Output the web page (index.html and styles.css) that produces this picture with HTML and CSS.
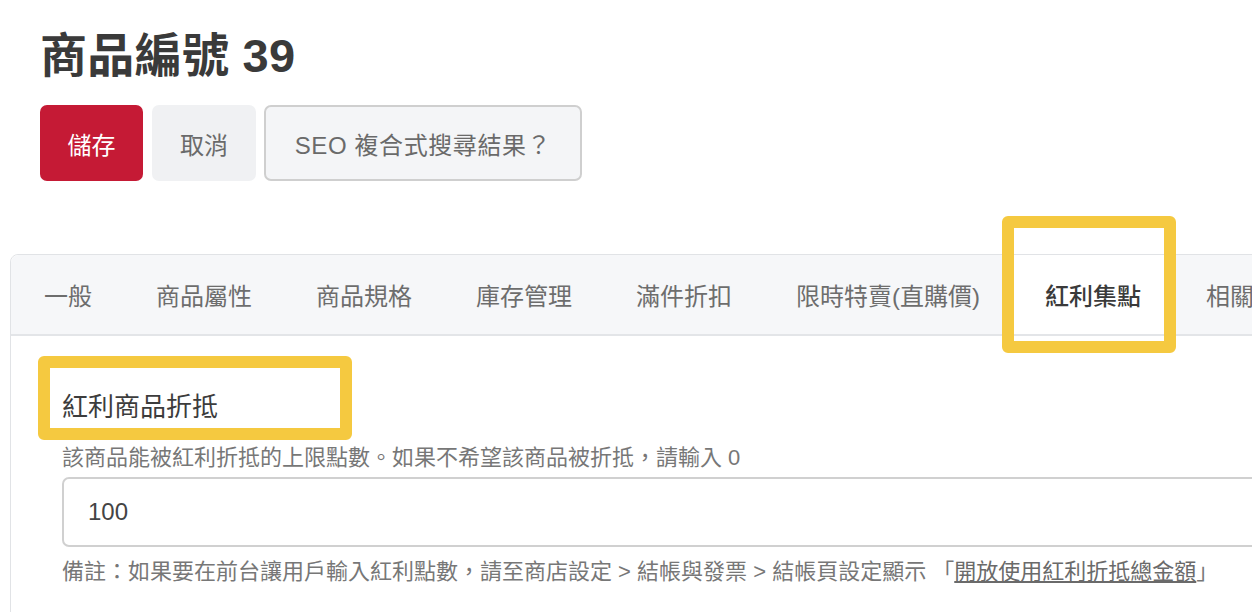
FILE: index.html
```html
<!DOCTYPE html>
<html lang="zh-Hant">
<head>
<meta charset="utf-8">
<title>商品編號 39</title>
<link rel="stylesheet" href="styles.css">
</head>
<body>
<div class="page">
  <header class="top">
    <h1 class="title">商品編號 39</h1>
    <div class="actions">
      <button class="btn btn-save">儲存</button>
      <button class="btn btn-cancel">取消</button>
      <button class="btn btn-seo">SEO 複合式搜尋結果？</button>
    </div>
  </header>

  <section class="card">
    <nav class="tabs">
      <div class="tab">一般</div>
      <div class="tab">商品屬性</div>
      <div class="tab">商品規格</div>
      <div class="tab">庫存管理</div>
      <div class="tab">滿件折扣</div>
      <div class="tab">限時特賣(直購價)</div>
      <div class="tab tab-active">紅利集點</div>
      <div class="tab">相關商品</div>
    </nav>
    <div class="card-body">
      <h2 class="section-title">紅利商品折抵</h2>
      <p class="help">該商品能被紅利折抵的上限點數。如果不希望該商品被折抵，請輸入 0</p>
      <input class="field" type="text" value="100">
      <p class="note">備註：如果要在前台讓用戶輸入紅利點數，請至商店設定 &gt; 結帳與發票 &gt; 結帳頁設定顯示 「<a class="note-link" href="#">開放使用紅利折抵總金額</a>」</p>
    </div>
  </section>

  <div class="highlight hl-tab"></div>
  <div class="highlight hl-title"></div>
</div>
</body>
</html>
```

FILE: styles.css
```css
html, body {
  margin: 0;
  padding: 0;
  overflow: hidden;
  background: #ffffff;
}

body {
  font-family: "Liberation Sans", "Noto Sans CJK TC", sans-serif;
  color: #333333;
}

.page {
  position: relative;
  width: 1252px;
  height: 612px;
  overflow: hidden;
}

.top {
  padding: 28px 0 0 40px;
}

.title {
  margin: 0;
  font-size: 47px;
  line-height: 55px;
  font-weight: 700;
  color: #3a3a3a;
  letter-spacing: 0.3px;
}

.actions {
  display: flex;
  gap: 9px;
  margin-top: 22px;
}

.btn {
  height: 76px;
  font-family: inherit;
  font-size: 24px;
  border-radius: 7px;
  border: 0;
  padding: 0 16px;
  cursor: pointer;
  white-space: nowrap;
}

.btn-save {
  width: 103px;
  background: #c51a35;
  color: #ffffff;
}

.btn-cancel {
  width: 104px;
  background: #f0f1f3;
  color: #6a6a6a;
}

.btn-seo {
  width: 318px;
  margin-left: -1px;
  background: #f4f5f7;
  color: #6a6a6a;
  border: 2px solid #cfcfcf;
  letter-spacing: 0.6px;
}

.card {
  margin: 73px 0 0 10px;
  width: 1400px;
  height: 400px;
  border: 1px solid #e1e3e6;
  border-radius: 8px;
}

.tabs {
  display: flex;
  padding-left: 1px;
  background: #f6f7f9;
  border-bottom: 2px solid #e3e5e8;
  border-radius: 8px 8px 0 0;
}

.tab {
  height: 79px;
  padding: 0 32px;
  display: flex;
  align-items: center;
  font-size: 24px;
  color: #6d6d6d;
  white-space: nowrap;
}

.tab-active {
  background: #ffffff;
  color: #3a3a3a;
  font-weight: 500;
  border-left: 1px solid #dee2e6;
  border-right: 1px solid #dee2e6;
}

.card-body {
  padding: 52px 0 0 51px;
}

.section-title {
  margin: 0;
  font-size: 26px;
  line-height: 39px;
  font-weight: 400;
  color: #3c3c3c;
}

.help {
  margin: 14px 0 0;
  font-size: 22px;
  line-height: 33px;
  color: #777777;
}

.field {
  display: block;
  box-sizing: border-box;
  margin-top: 3px;
  width: 1300px;
  height: 70px;
  padding: 0 24px;
  border: 2px solid #d0d0d0;
  border-radius: 7px;
  font-family: inherit;
  font-size: 24px;
  color: #444444;
  background: #ffffff;
  outline: none;
}

.note {
  margin: 8px 0 0;
  font-size: 22px;
  line-height: 33px;
  color: #777777;
  white-space: nowrap;
}

.note-link {
  color: #6a6a6a;
  text-decoration: underline;
}

.highlight {
  position: absolute;
  box-sizing: border-box;
  border: 12px solid #f5c940;
  border-radius: 6px;
  pointer-events: none;
}

.hl-tab {
  left: 1002px;
  top: 216px;
  width: 174px;
  height: 137px;
}

.hl-title {
  left: 38px;
  top: 356px;
  width: 314px;
  height: 84px;
}
```
